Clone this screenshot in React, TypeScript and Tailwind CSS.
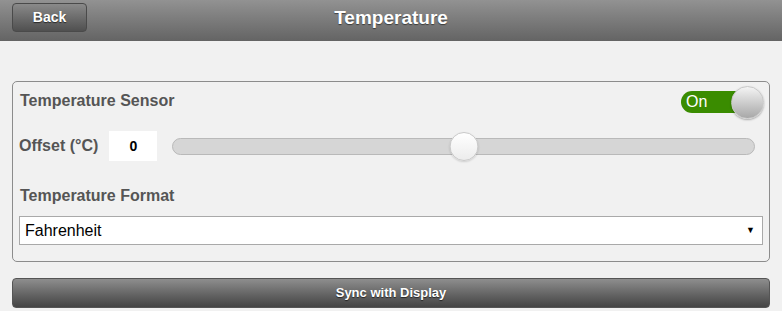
export default function App() {
  const offset = 0;
  const pct = 50;

  return (
    <div
      className="min-h-[311px] w-full bg-[#f1f1f1]"
      style={{ fontFamily: '"Liberation Sans", Arial, sans-serif' }}
    >
      {/* Header */}
      <div className="relative flex h-[41px] items-center justify-center bg-gradient-to-b from-[#929292] to-[#646464]">
        <button
          type="button"
          className="absolute left-[12px] top-[3px] h-[29px] w-[75px] rounded-[4px] border border-[#4a4a4a] bg-gradient-to-b from-[#8a8a8a] to-[#505050] text-[14px] font-bold text-white [text-shadow:0_1px_1px_rgba(0,0,0,0.6)]"
        >
          Back
        </button>
        <h1 className="pb-[4px] text-[19px] font-bold text-white [text-shadow:0_1px_1px_rgba(0,0,0,0.5)]">
          Temperature
        </h1>
      </div>

      <div className="px-[12px] pt-[40px]">
        {/* Card */}
        <div className="rounded-[5px] border border-[#8c8c8c] px-[6px] pb-[16px] pt-[4px]">
          <div className="flex items-center justify-between">
            <span className="mb-[4px] pl-[1px] text-[16px] font-bold text-[#555]">Temperature Sensor</span>
            <div className="relative mr-[-1px] h-[33px] w-[83px]">
              <div className="absolute left-0 top-[5px] flex h-[22px] w-[70px] items-center rounded-full bg-[#3a8c00] pl-[5px] text-[16px] text-white">
                On
              </div>
              <div className="absolute right-0 top-0 h-[33px] w-[33px] rounded-full border border-[#c8c8c8] bg-gradient-to-b from-[#f4f4f4] to-[#a8a8a8] shadow-[0_1px_2px_rgba(0,0,0,0.3)]" />
            </div>
          </div>

          <div className="mt-[12px] flex items-center">
            <span className="text-[16px] font-bold text-[#555]">Offset (°C)</span>
            <div className="ml-[11px] flex h-[30px] w-[48px] items-center justify-center bg-white text-[14px] font-bold text-black">
              {offset}
            </div>
            <div className="relative ml-[15px] mr-[8px] flex-1">
              <div className="h-[17px] rounded-full border border-[#b9b9b9] bg-[#d6d6d6]" />
              <div
                className="absolute top-[-6px] h-[29px] w-[29px] -translate-x-1/2 rounded-full border border-[#c9c9c9] bg-gradient-to-b from-white to-[#ececec] shadow-[0_1px_2px_rgba(0,0,0,0.15)]"
                style={{ left: `${pct}%` }}
              />
            </div>
          </div>

          <div className="mt-[23px] pl-[1px] text-[16px] font-bold text-[#555]">Temperature Format</div>

          <div className="mt-[8px] flex h-[29px] items-center justify-between border border-[#a9a9a9] bg-white pl-[5px] pr-[7px] text-[16px] text-black">
            <span>Fahrenheit</span>
            <span className="text-[9px]">▼</span>
          </div>
        </div>

        {/* Sync button */}
        <button
          type="button"
          className="mt-[16px] flex h-[30px] w-full items-center justify-center rounded-[4px] border border-[#555] bg-gradient-to-b from-[#8e8e8e] to-[#444] text-[13px] font-bold text-white [text-shadow:0_1px_1px_rgba(0,0,0,0.6)]"
        >
          Sync with Display
        </button>
      </div>
    </div>
  );
}
